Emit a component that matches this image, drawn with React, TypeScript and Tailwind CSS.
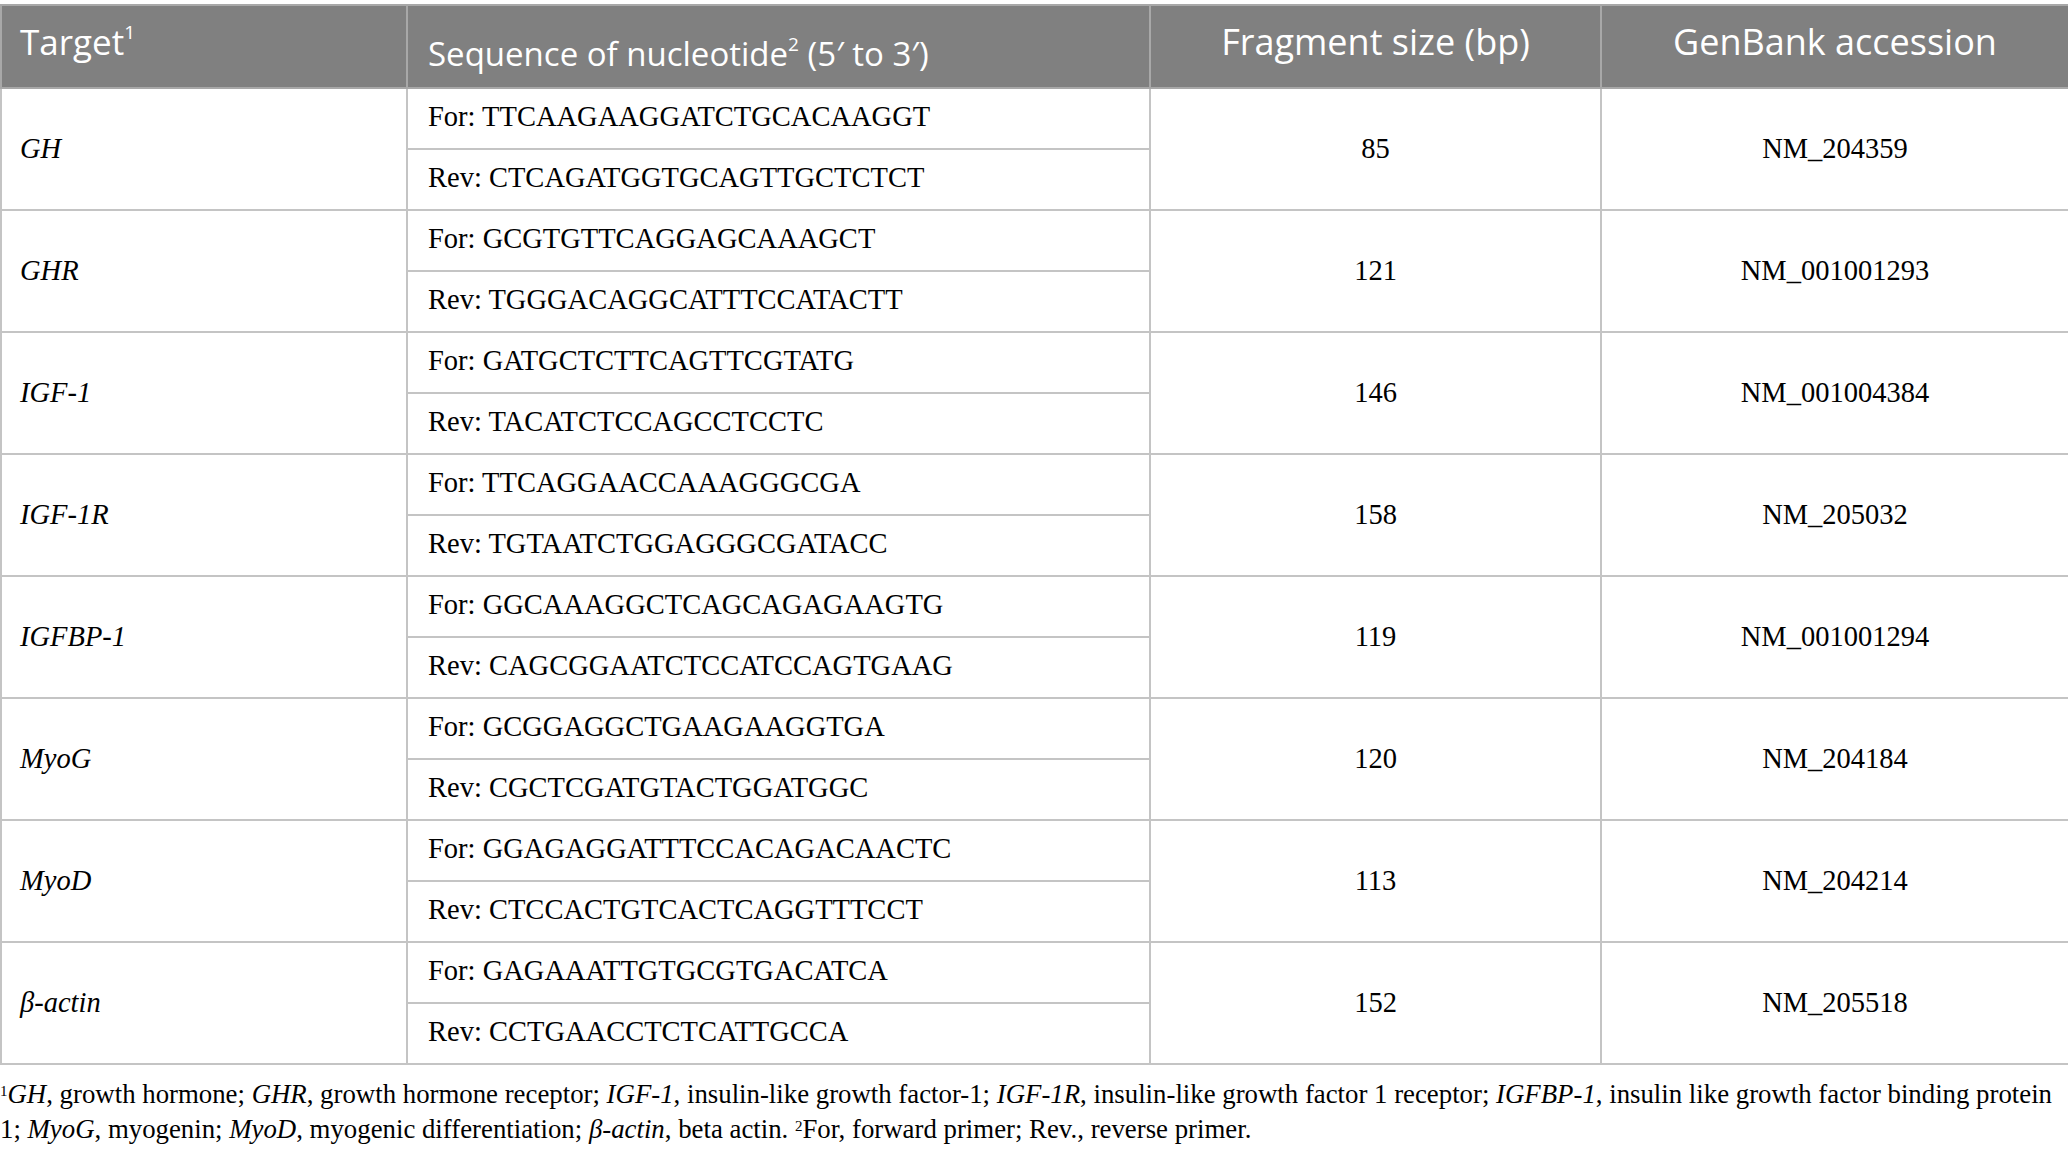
import React from "react";

const rows = [
  { t: "GH", f: "For: TTCAAGAAGGATCTGCACAAGGT", r: "Rev: CTCAGATGGTGCAGTTGCTCTCT", s: "85", g: "NM_204359" },
  { t: "GHR", f: "For: GCGTGTTCAGGAGCAAAGCT", r: "Rev: TGGGACAGGCATTTCCATACTT", s: "121", g: "NM_001001293" },
  { t: "IGF-1", f: "For: GATGCTCTTCAGTTCGTATG", r: "Rev: TACATCTCCAGCCTCCTC", s: "146", g: "NM_001004384" },
  { t: "IGF-1R", f: "For: TTCAGGAACCAAAGGGCGA", r: "Rev: TGTAATCTGGAGGGCGATACC", s: "158", g: "NM_205032" },
  { t: "IGFBP-1", f: "For: GGCAAAGGCTCAGCAGAGAAGTG", r: "Rev: CAGCGGAATCTCCATCCAGTGAAG", s: "119", g: "NM_001001294" },
  { t: "MyoG", f: "For: GCGGAGGCTGAAGAAGGTGA", r: "Rev: CGCTCGATGTACTGGATGGC", s: "120", g: "NM_204184" },
  { t: "MyoD", f: "For: GGAGAGGATTTCCACAGACAACTC", r: "Rev: CTCCACTGTCACTCAGGTTTCCT", s: "113", g: "NM_204214" },
  { t: "β-actin", f: "For: GAGAAATTGTGCGTGACATCA", r: "Rev: CCTGAACCTCTCATTGCCA", s: "152", g: "NM_205518" },
];

const serif = "font-['Liberation_Serif','Times_New_Roman',serif]";
const cell = "border-2 border-[#c4c4c4] h-[61px] align-middle";

export default function App() {
  return (
    <div className="w-[2068px] h-[1158px] bg-white pt-[4px] text-black">
      <table className="w-[2068px] border-collapse table-fixed">
        <colgroup>
          <col className="w-[406px]" />
          <col className="w-[743px]" />
          <col className="w-[451px]" />
          <col className="w-[468px]" />
        </colgroup>
        <thead>
          <tr className="bg-[#808080] text-white font-['Open_Sans',sans-serif] h-[83px] leading-none">
            <th className="border-2 border-[#a8a8a8] text-left font-normal pl-[18px] pb-[10px] align-middle text-[35px]">
              Target<sup className="text-[19px] top-[-0.85em]">1</sup>
            </th>
            <th className="border-2 border-[#a8a8a8] text-left font-normal pl-[20px] pt-[14px] align-middle text-[33px]">
              Sequence of nucleotide<sup className="text-[19px] top-[-0.8em]">2</sup> (5′ to 3′)
            </th>
            <th className="border-2 border-[#a8a8a8] text-center font-normal pb-[10px] align-middle text-[36px]">Fragment size (bp)</th>
            <th className="border-2 border-[#a8a8a8] text-center font-normal pb-[10px] align-middle text-[36px]">GenBank accession</th>
          </tr>
        </thead>
        <tbody className={`${serif} text-[28.5px]`}>
          {rows.map((r) => (
            <React.Fragment key={r.t}>
              <tr>
                <td rowSpan={2} className={`${cell} pl-[18px] italic`}>{r.t}</td>
                <td className={`${cell} pl-[20px] pb-[2px]`}>{r.f}</td>
                <td rowSpan={2} className={`${cell} text-center`}>{r.s}</td>
                <td rowSpan={2} className={`${cell} text-center`}>{r.g}</td>
              </tr>
              <tr>
                <td className={`${cell} pl-[20px] pb-[2px]`}>{r.r}</td>
              </tr>
            </React.Fragment>
          ))}
        </tbody>
      </table>
      <div className={`${serif} text-[26.8px] leading-[35px] pt-[12px] whitespace-nowrap`}>
        <div>
          <sup className="text-[15px]">1</sup><i>GH</i>, growth hormone; <i>GHR</i>, growth hormone receptor; <i>IGF-1</i>, insulin-like growth factor-1; <i>IGF-1R</i>, insulin-like growth factor 1 receptor; <i>IGFBP-1</i>, insulin like growth factor binding protein
        </div>
        <div>
          1; <i>MyoG</i>, myogenin; <i>MyoD</i>, myogenic differentiation; <i>β-actin</i>, beta actin. <sup className="text-[15px]">2</sup>For, forward primer; Rev., reverse primer.
        </div>
      </div>
    </div>
  );
}
